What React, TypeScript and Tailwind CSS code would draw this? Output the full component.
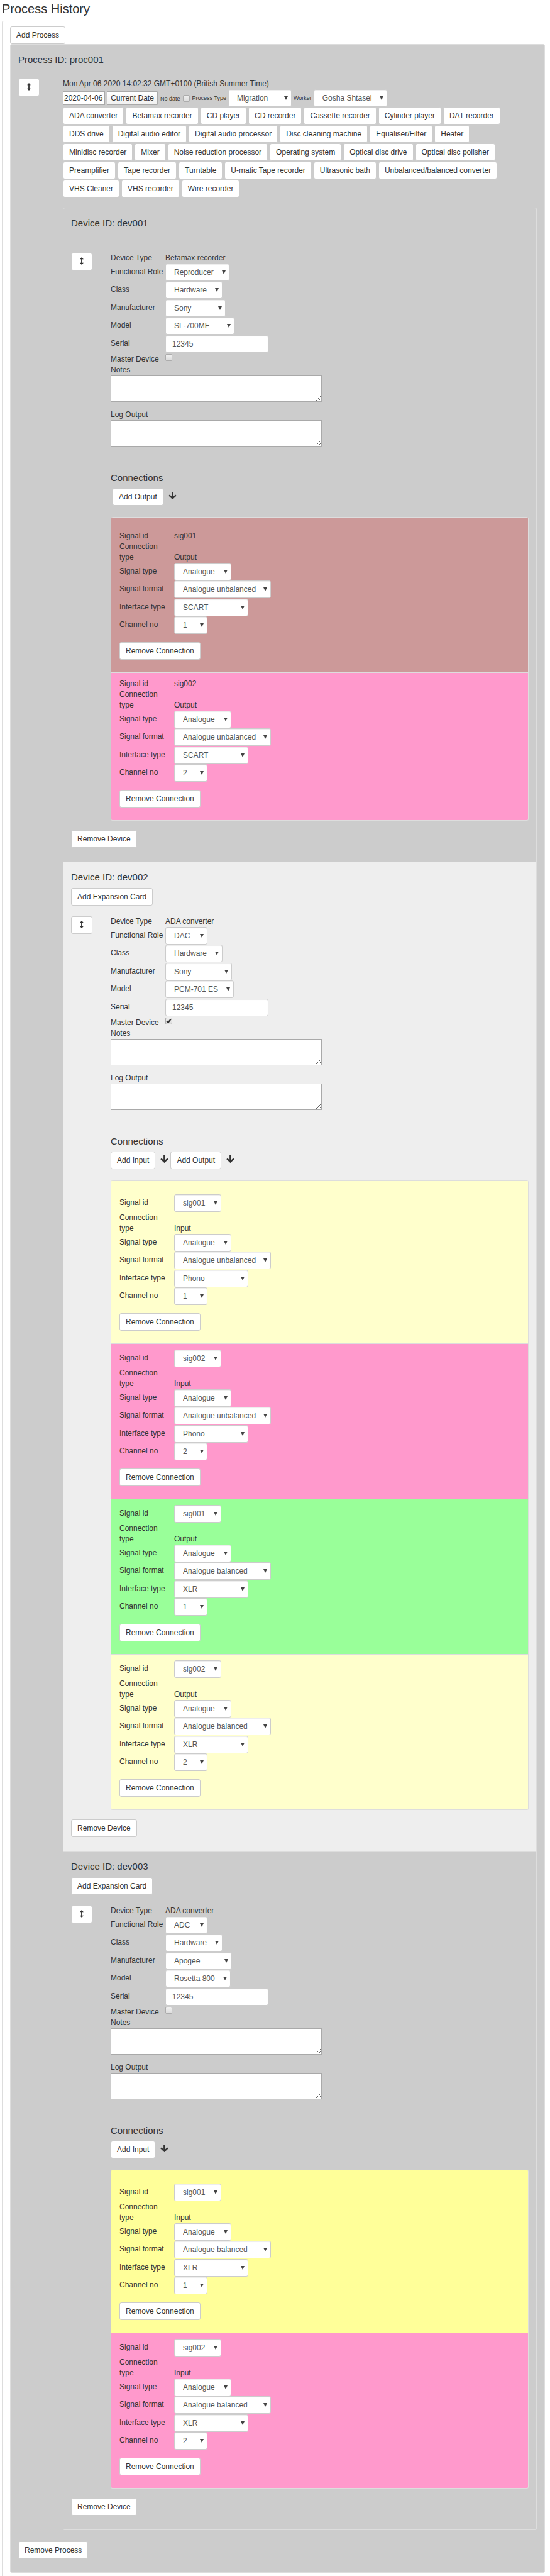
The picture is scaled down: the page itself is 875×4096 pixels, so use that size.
import { useId } from "react";
import type { ReactNode } from "react";

const deviceTypes = [
  "ADA converter", "Betamax recorder", "CD player", "CD recorder", "Cassette recorder", "Cylinder player", "DAT recorder",
  "DDS drive", "Digital audio editor", "Digital audio processor", "Disc cleaning machine", "Equaliser/Filter", "Heater",
  "Minidisc recorder", "Mixer", "Noise reduction processor", "Operating system", "Optical disc drive", "Optical disc polisher",
  "Preamplifier", "Tape recorder", "Turntable", "U-matic Tape recorder", "Ultrasonic bath", "Unbalanced/balanced converter",
  "VHS Cleaner", "VHS recorder", "Wire recorder",
];

type Connection = {
  signal: string;
  fixedSignal?: boolean;
  direction: "Input" | "Output";
  format: string;
  iface: string;
  channel: string;
  color: string;
};

type Device = {
  id: string;
  type: string;
  role: [string, string];
  manufacturer: [string, string];
  model: [string, string];
  master: boolean;
  expandable: boolean;
  inputs: boolean;
  outputs: boolean;
  background: string;
  connections: Connection[];
};

const devices: Device[] = [
  {
    id: "dev001",
    type: "Betamax recorder",
    role: ["Reproducer", "w-[102px]"],
    manufacturer: ["Sony", "w-[96px]"],
    model: ["SL-700ME", "w-[110px]"],
    master: false,
    expandable: false,
    inputs: false,
    outputs: true,
    background: "bg-[#cccccc]",
    connections: [
      { signal: "sig001", fixedSignal: true, direction: "Output", format: "Analogue unbalanced", iface: "SCART", channel: "1", color: "bg-[#cc9999]" },
      { signal: "sig002", fixedSignal: true, direction: "Output", format: "Analogue unbalanced", iface: "SCART", channel: "2", color: "bg-[#ff99cc]" },
    ],
  },
  {
    id: "dev002",
    type: "ADA converter",
    role: ["DAC", "w-[67px]"],
    manufacturer: ["Sony", "w-[106px]"],
    model: ["PCM-701 ES", "w-[109px]"],
    master: true,
    expandable: true,
    inputs: true,
    outputs: true,
    background: "bg-[#eeeeee]",
    connections: [
      { signal: "sig001", direction: "Input", format: "Analogue unbalanced", iface: "Phono", channel: "1", color: "bg-[#ffffcc]" },
      { signal: "sig002", direction: "Input", format: "Analogue unbalanced", iface: "Phono", channel: "2", color: "bg-[#ff99cc]" },
      { signal: "sig001", direction: "Output", format: "Analogue balanced", iface: "XLR", channel: "1", color: "bg-[#99ff99]" },
      { signal: "sig002", direction: "Output", format: "Analogue balanced", iface: "XLR", channel: "2", color: "bg-[#ffffcc]" },
    ],
  },
  {
    id: "dev003",
    type: "ADA converter",
    role: ["ADC", "w-[67px]"],
    manufacturer: ["Apogee", "w-[106px]"],
    model: ["Rosetta 800", "w-[104px]"],
    master: false,
    expandable: true,
    inputs: true,
    outputs: false,
    background: "bg-[#cccccc]",
    connections: [
      { signal: "sig001", direction: "Input", format: "Analogue balanced", iface: "XLR", channel: "1", color: "bg-[#ffff99]" },
      { signal: "sig002", direction: "Input", format: "Analogue balanced", iface: "XLR", channel: "2", color: "bg-[#ff99cc]" },
    ],
  },
];

function Button({ children }: { children: ReactNode }) {
  return (
    <button
      type="button"
      className="flex h-[28px] shrink-0 items-center rounded-[3px] border border-[#cccccc] bg-white px-[9px] whitespace-nowrap"
    >
      {children}
    </button>
  );
}

function MoveHandle() {
  return (
    <button
      type="button"
      aria-label="Move"
      className="flex h-[28px] w-[34px] shrink-0 items-center justify-center rounded-[3px] border border-[#cccccc] bg-white pb-[2px]"
    >
      <svg viewBox="0 0 6 12" className="h-[12px] w-[6px]" fill="#333333">
        <path d="M3 0 6 3.2H3.9V8.8H6L3 12 0 8.8H2.1V3.2H0Z" />
      </svg>
    </button>
  );
}

function ArrowDown() {
  return (
    <svg viewBox="0 0 15 14" className="mb-[4px] h-[12px] w-[13px] shrink-0" fill="none" stroke="#333333" aria-hidden="true">
      <path d="M7.5 0V11.5" strokeWidth="3.2" />
      <path d="M1.2 6.3 7.5 12.2 13.8 6.3" strokeWidth="2.8" />
    </svg>
  );
}

function Select({ id, value, width }: { id: string; value: string; width: string }) {
  return (
    <div className={`relative shrink-0 ${width}`}>
      <select
        id={id}
        defaultValue={value}
        className="block h-[28px] w-full appearance-none rounded-[3px] border border-[#cccccc] bg-white pl-[13px] text-[12px] leading-[17px] text-[#555555] shadow-[inset_0_1px_1px_rgba(0,0,0,0.075)]"
      >
        <option>{value}</option>
      </select>
      <svg viewBox="0 0 6 6" className="pointer-events-none absolute top-[11px] right-[6px] h-[6px] w-[6px]" fill="#444444" aria-hidden="true">
        <path d="M0 0H6L3 6Z" />
      </svg>
    </div>
  );
}

function Checkbox({ id, checked }: { id: string; checked?: boolean }) {
  return (
    <span className="relative block h-[11px] w-[11px] shrink-0">
      <input
        id={id}
        type="checkbox"
        defaultChecked={checked}
        className="peer block h-[11px] w-[11px] appearance-none rounded-[2px] border border-[#acacac] bg-linear-to-b from-[#f0f0f0] to-[#dcdcdc]"
      />
      <svg viewBox="0 0 11 11" className="pointer-events-none absolute inset-0 hidden h-[11px] w-[11px] peer-checked:block" fill="none" stroke="#333333" strokeWidth="2.2" aria-hidden="true">
        <path d="M2.3 5.6 4.5 8 8.8 2.4" />
      </svg>
    </span>
  );
}

function SelectRow({ label, value, width }: { label: string; value: string; width: string }) {
  const id = useId();
  return (
    <div className="flex h-[28px] items-start even:h-[29px]">
      <label htmlFor={id} className="w-[87px] shrink-0 leading-[26px] whitespace-nowrap">{label}</label>
      <Select id={id} value={value} width={width} />
    </div>
  );
}

function TextRow({ label, value }: { label: string; value: string }) {
  const id = useId();
  return (
    <div className="flex h-[28px] items-start">
      <label htmlFor={id} className="w-[87px] shrink-0 leading-[26px]">{label}</label>
      <input
        id={id}
        type="text"
        defaultValue={value}
        className="h-[28px] w-[164px] rounded-[3px] border border-[#cccccc] bg-white px-[10px] text-[#555555] shadow-[inset_0_1px_1px_rgba(0,0,0,0.075)]"
      />
    </div>
  );
}

function NotesField({ label }: { label: string }) {
  const id = useId();
  return (
    <div>
      <label htmlFor={id} className="block">{label}</label>
      <textarea id={id} className="block h-[42px] w-[336px] border border-[#a9a9a9] bg-white" />
    </div>
  );
}

function ConnectionCard({ connection }: { connection: Connection }) {
  const id = useId();
  return (
    <li className={`border-t border-[#dddddd] px-[13px] pt-[9px] pb-[20px] first:pt-[21px] ${connection.color}`}>
      {connection.fixedSignal ? (
        <div className="flex">
          <span className="w-[87px] shrink-0">Signal id</span>
          <span>{connection.signal}</span>
        </div>
      ) : (
        <div className="flex h-[29px] items-start">
          <label htmlFor={id} className="w-[87px] shrink-0 leading-[26px]">Signal id</label>
          <Select id={id} value={connection.signal} width="w-[75px]" />
        </div>
      )}
      <div className="flex items-end">
        <span className="w-[87px] shrink-0 pr-[12px]">Connection type</span>
        <span>{connection.direction}</span>
      </div>
      <div>
        <SelectRow label="Signal type" value="Analogue" width="w-[91px]" />
        <SelectRow label="Signal format" value={connection.format} width="w-[154px]" />
        <SelectRow label="Interface type" value={connection.iface} width="w-[118px]" />
        <SelectRow label="Channel no" value={connection.channel} width="w-[53px]" />
      </div>
      <div className="mt-[12px] flex">
        <Button>Remove Connection</Button>
      </div>
    </li>
  );
}

function DeviceItem({ device }: { device: Device }) {
  const id = useId();
  return (
    <li className={`border-t border-[#dddddd] px-[12px] pt-[15px] pb-[22px] first:rounded-t-[3px] last:rounded-b-[3px] ${device.background}`}>
      <h4 className="text-[15px] leading-[17px]">Device ID: {device.id}</h4>
      {device.expandable ? (
        <div className="mt-[9px] mb-[17px] flex">
          <Button>Add Expansion Card</Button>
        </div>
      ) : (
        <div className="h-[39px]" />
      )}
      <div className="flex gap-[29px]">
        <MoveHandle />
        <div className="min-w-0 flex-1">
          <div className="flex">
            <span className="w-[87px] shrink-0">Device Type</span>
            <span>{device.type}</span>
          </div>
          <div>
            <SelectRow label="Functional Role" value={device.role[0]} width={device.role[1]} />
            <SelectRow label="Class" value="Hardware" width="w-[91px]" />
            <SelectRow label="Manufacturer" value={device.manufacturer[0]} width={device.manufacturer[1]} />
            <SelectRow label="Model" value={device.model[0]} width={device.model[1]} />
            <TextRow label="Serial" value="12345" />
          </div>
          <div className="mt-[2px] flex">
            <label htmlFor={id} className="w-[87px] shrink-0">Master Device</label>
            <Checkbox id={id} checked={device.master} />
          </div>
          <div className="flex flex-col gap-[12px]">
            <NotesField label="Notes" />
            <NotesField label="Log Output" />
          </div>
          <h4 className="mt-[41px] text-[15px] leading-[17px]">Connections</h4>
          <div className={device.inputs ? "mt-[8px] flex items-center" : "mt-[8px] flex items-center pl-[3px]"}>
            {device.inputs && (
              <div className="mr-[3px] flex items-center gap-[8px]">
                <Button>Add Input</Button>
                <ArrowDown />
              </div>
            )}
            {device.outputs && (
              <div className="flex items-center gap-[8px]">
                <Button>Add Output</Button>
                <ArrowDown />
              </div>
            )}
          </div>
          <ul className="mt-[18px] overflow-hidden rounded-[3px] border-x border-b border-[#dddddd]">
            {device.connections.map((connection, index) => (
              <ConnectionCard key={index} connection={connection} />
            ))}
          </ul>
        </div>
      </div>
      <div className="mt-[15px] flex">
        <Button>Remove Device</Button>
      </div>
    </li>
  );
}

export default function App() {
  const dateId = useId();
  const noDateId = useId();
  const processTypeId = useId();
  const workerId = useId();
  return (
    <main className="flex min-h-screen flex-col overflow-hidden bg-white font-['Liberation_Sans',Arial,sans-serif] text-[12px] leading-[17px] text-[#333333]">
      <h3 className="pt-[2px] pb-[7px] pl-[3px] text-[20px] leading-[24px]">Process History</h3>
      <div className="ml-[3px] flex-1 rounded-tl-[3px] border-t border-l border-[#dddddd] pt-[8px] pr-[8px] pl-[12px]">
        <div className="flex">
          <Button>Add Process</Button>
        </div>
        <section className="rounded-[3px] border border-[#dddddd] bg-[#cccccc] px-[12px] pt-[15px] pb-[21px]">
          <h4 className="text-[15px] leading-[17px]">Process ID: proc001</h4>
          <div className="mt-[22px] flex gap-[37px]">
            <MoveHandle />
            <div className="min-w-0 flex-1">
              <p>Mon Apr 06 2020 14:02:32 GMT+0100 (British Summer Time)</p>
              <div className="flex h-[28px] items-center">
                <input
                  id={dateId}
                  type="text"
                  aria-label="Date"
                  defaultValue="2020-04-06"
                  className="h-[22px] w-[67px] border border-[#a9a9a9] bg-white pl-px"
                />
                <button type="button" className="ml-[3px] h-[22px] w-[81px] rounded-[1px] border border-[#a9a9a9] bg-linear-to-b from-white to-[#f0f0f0]">
                  Current Date
                </button>
                <label htmlFor={noDateId} className="mr-[4px] ml-[4px] pt-[2px] text-[9px]">No date</label>
                <Checkbox id={noDateId} />
                <label htmlFor={processTypeId} className="mr-[3px] ml-[4px] text-[9px]">Process Type</label>
                <Select id={processTypeId} value="Migration" width="w-[101px]" />
                <label htmlFor={workerId} className="mr-[3px] ml-[3px] text-[9px]">Worker</label>
                <Select id={workerId} value="Gosha Shtasel" width="w-[117px]" />
              </div>
              <div className="flex flex-wrap gap-x-[3px] gap-y-px">
                {deviceTypes.map((type) => (
                  <Button key={type}>{type}</Button>
                ))}
              </div>
              <ul className="mt-[16px] rounded-[3px] border-x border-b border-[#dddddd]">
                {devices.map((device) => (
                  <DeviceItem key={device.id} device={device} />
                ))}
              </ul>
            </div>
          </div>
          <div className="mt-[18px] flex">
            <Button>Remove Process</Button>
          </div>
        </section>
      </div>
    </main>
  );
}
